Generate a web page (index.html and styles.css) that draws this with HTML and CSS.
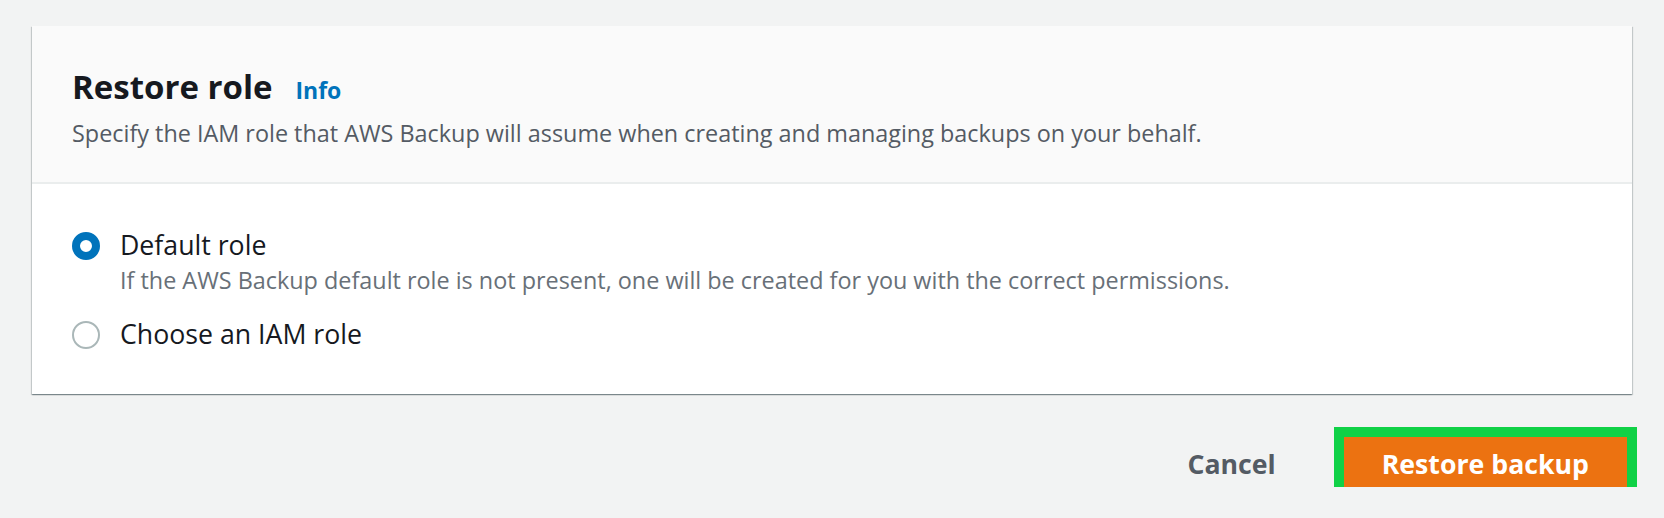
FILE: index.html
```html
<!DOCTYPE html>
<html lang="en">
<head>
<meta charset="utf-8">
<title>Restore role</title>
<link rel="stylesheet" href="styles.css">
</head>
<body>
<main class="page">
  <section class="card">
    <header class="card-header">
      <div class="title-row">
        <h2 class="title">Restore role</h2>
        <a class="info" href="#">Info</a>
      </div>
      <p class="desc">Specify the IAM role that AWS Backup will assume when creating and managing backups on your behalf.</p>
    </header>
    <div class="card-body">
      <label class="radio">
        <span class="dot checked"></span>
        <span class="radio-text">
          <span class="radio-label">Default role</span>
          <span class="radio-desc">If the AWS Backup default role is not present, one will be created for you with the correct permissions.</span>
        </span>
      </label>
      <label class="radio">
        <span class="dot"></span>
        <span class="radio-text">
          <span class="radio-label">Choose an IAM role</span>
        </span>
      </label>
    </div>
  </section>
  <div class="actions">
    <button class="btn-cancel" type="button">Cancel</button>
    <button class="btn-primary" type="button">Restore backup</button>
  </div>
</main>
</body>
</html>
```

FILE: styles.css
```css
* { box-sizing: border-box; }
html, body { margin: 0; padding: 0; }
body {
  background: #f2f3f3;
  font-family: "Open Sans", "Noto Sans", sans-serif;
  color: #16191f;
}
.page {
  padding: 26px 32px 0 32px;
}
.card {
  background: #ffffff;
  box-shadow: 0 1px 1px 0 rgba(0, 28, 36, 0.3), 1px 1px 1px 0 rgba(0, 28, 36, 0.15), -1px 1px 1px 0 rgba(0, 28, 36, 0.15);
}
.card-header {
  background: #fafafa;
  border-bottom: 2px solid #eaeded;
  height: 158px;
  padding: 41px 40px 0 40px;
}
.title-row {
  display: flex;
  align-items: baseline;
  gap: 23px;
}
.title {
  margin: 0;
  font-size: 33px;
  line-height: 40px;
  font-weight: 700;
  color: #16191f;
}
.info {
  font-size: 23px;
  font-weight: 700;
  color: #0073bb;
  text-decoration: none;
}
.desc {
  margin: 10px 0 0 0;
  font-size: 23.4px;
  line-height: 32px;
  color: #545b64;
}
.card-body {
  height: 210px;
  padding: 43px 40px 0 40px;
  display: flex;
  flex-direction: column;
  gap: 20px;
}
.radio {
  display: flex;
  align-items: flex-start;
  gap: 20px;
}
.dot {
  flex: none;
  width: 28px;
  height: 28px;
  margin-top: 5px;
  border-radius: 50%;
  border: 2px solid #aab7b8;
  background: #fff;
}
.dot.checked {
  border: 8px solid #0073bb;
}
.radio-text {
  display: flex;
  flex-direction: column;
}
.radio-label {
  font-size: 26.7px;
  line-height: 36px;
  color: #16191f;
}
.radio-desc {
  margin-top: 1px;
  font-size: 23.4px;
  line-height: 32px;
  color: #687078;
}
.actions {
  display: flex;
  justify-content: flex-end;
  align-items: center;
  margin-top: 43px;
  padding-right: 5px;
  gap: 68px;
}
.btn-cancel {
  border: 0;
  background: transparent;
  padding: 3px 0 0 0;
  font-family: inherit;
  font-size: 26.7px;
  font-weight: 700;
  color: #545b64;
}
.btn-primary {
  height: 50px;
  padding: 3px 38px 0 38px;
  border: 0;
  background: #ec7211;
  outline: 10px solid #10d146;
  font-family: inherit;
  font-size: 26.7px;
  font-weight: 700;
  color: #ffffff;
}
```
